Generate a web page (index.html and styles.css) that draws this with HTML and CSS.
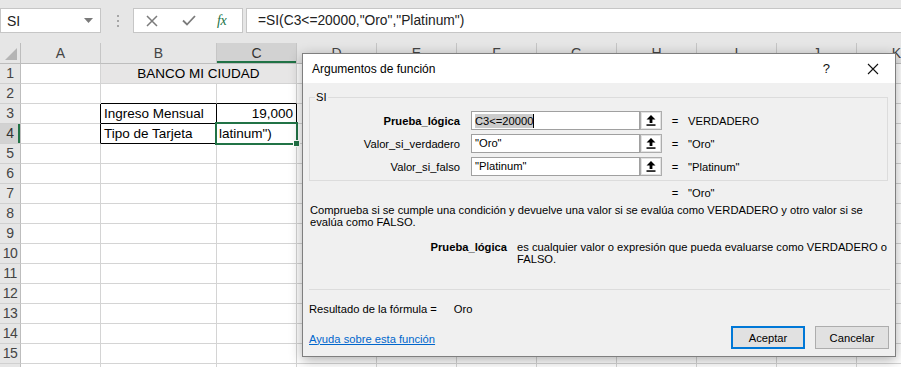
FILE: index.html
```html
<!DOCTYPE html>
<html lang="es">
<head>
<meta charset="utf-8">
<title>Argumentos de función</title>
<link rel="stylesheet" href="styles.css">
</head>
<body>
<div class="topbar">
  <div class="namebox"><span>SI</span><svg class="caret" width="9" height="5" viewBox="0 0 9 5"><path d="M0 0H9L4.5 5Z" fill="#7a7a7a"/></svg></div>
  <svg class="grip" width="6" height="14" viewBox="0 0 6 14"><rect x="2" y="1" width="2" height="2" fill="#a6a6a6"/><rect x="2" y="6" width="2" height="2" fill="#a6a6a6"/><rect x="2" y="11" width="2" height="2" fill="#a6a6a6"/></svg>
  <div class="fxbtns">
    <svg class="ic-x" width="12" height="12" viewBox="0 0 12 12"><path d="M1 1L11 11M11 1L1 11" stroke="#7b7b7b" stroke-width="1.5" fill="none"/></svg>
    <svg class="ic-ok" width="14" height="11" viewBox="0 0 14 11"><path d="M1 5.5L5 9.5L13 1" stroke="#7b7b7b" stroke-width="1.8" fill="none"/></svg>
    <span class="fx">fx</span>
  </div>
  <div class="formula">=SI(C3&lt;=20000,"Oro","Platinum")</div>
</div>

<div class="sheet">
  <div class="row hdr">
    <div class="corner"><svg width="14" height="14" viewBox="0 0 14 14"><path d="M13 1V13H1Z" fill="#b5b5b5"/></svg></div>
    <div class="ch wa">A</div><div class="ch wb">B</div><div class="ch wc sel">C</div>
    <div class="ch wc">D</div><div class="ch wc">E</div><div class="ch wc">F</div><div class="ch wc">G</div>
    <div class="ch wc">H</div><div class="ch wc">I</div><div class="ch wc">J</div><div class="ch wc">K</div>
  </div>
  <div class="row"><div class="rh">1</div><div class="cell wa"></div><div class="cell wbc fill">BANCO MI CIUDAD</div><div class="rest"></div></div>
  <div class="row"><div class="rh">2</div><div class="cell wa"></div><div class="cell wb bb-k"></div><div class="cell wc bb-k"></div><div class="rest"></div></div>
  <div class="row"><div class="rh">3</div><div class="cell wa br-k"></div><div class="cell wb k">Ingreso Mensual</div><div class="cell wc k num">19,000</div><div class="rest"></div></div>
  <div class="row"><div class="rh rsel">4</div><div class="cell wa br-k"></div><div class="cell wb k">Tipo de Tarjeta</div><div class="cell wc k active">latinum")<span class="selbox"><span class="handle"></span></span></div><div class="rest"></div></div>
  <div class="row"><div class="rh">5</div><div class="cell wa"></div><div class="cell wb"></div><div class="cell wc"></div><div class="rest"></div></div>
  <div class="row"><div class="rh">6</div><div class="cell wa"></div><div class="cell wb"></div><div class="cell wc"></div><div class="rest"></div></div>
  <div class="row"><div class="rh">7</div><div class="cell wa"></div><div class="cell wb"></div><div class="cell wc"></div><div class="rest"></div></div>
  <div class="row"><div class="rh">8</div><div class="cell wa"></div><div class="cell wb"></div><div class="cell wc"></div><div class="rest"></div></div>
  <div class="row"><div class="rh">9</div><div class="cell wa"></div><div class="cell wb"></div><div class="cell wc"></div><div class="rest"></div></div>
  <div class="row"><div class="rh">10</div><div class="cell wa"></div><div class="cell wb"></div><div class="cell wc"></div><div class="rest"></div></div>
  <div class="row"><div class="rh">11</div><div class="cell wa"></div><div class="cell wb"></div><div class="cell wc"></div><div class="rest"></div></div>
  <div class="row"><div class="rh">12</div><div class="cell wa"></div><div class="cell wb"></div><div class="cell wc"></div><div class="rest"></div></div>
  <div class="row"><div class="rh">13</div><div class="cell wa"></div><div class="cell wb"></div><div class="cell wc"></div><div class="rest"></div></div>
  <div class="row"><div class="rh">14</div><div class="cell wa"></div><div class="cell wb"></div><div class="cell wc"></div><div class="rest"></div></div>
  <div class="row"><div class="rh">15</div><div class="cell wa"></div><div class="cell wb"></div><div class="cell wc"></div><div class="rest"></div></div>
  <div class="row"><div class="rh"></div><div class="cell wa"></div><div class="cell wb"></div><div class="cell wc"></div><div class="rest"></div></div>
</div>

<div class="dialog">
  <div class="dtitle">
    <span class="dname">Argumentos de función</span>
    <span class="help">?</span>
    <svg class="close" width="12" height="12" viewBox="0 0 12 12"><path d="M1 1L11 11M11 1L1 11" stroke="#111" stroke-width="1.1" fill="none"/></svg>
  </div>
  <div class="dbody">
    <div class="group">
      <span class="legend">SI</span>
      <div class="arg">
        <span class="lbl strong">Prueba_lógica</span>
        <div class="inp"><span class="hl">C3&lt;=20000</span><span class="cursor"></span></div>
        <div class="pick"><svg width="10" height="11" viewBox="0 0 10 11"><path d="M5 0L9.5 4.5H6.4V8H3.6V4.5H0.5Z" fill="#000"/><rect x="0.5" y="9.3" width="9" height="1.5" fill="#000"/></svg></div>
        <span class="eq">=</span><span class="val">VERDADERO</span>
      </div>
      <div class="arg">
        <span class="lbl">Valor_si_verdadero</span>
        <div class="inp">"Oro"</div>
        <div class="pick"><svg width="10" height="11" viewBox="0 0 10 11"><path d="M5 0L9.5 4.5H6.4V8H3.6V4.5H0.5Z" fill="#000"/><rect x="0.5" y="9.3" width="9" height="1.5" fill="#000"/></svg></div>
        <span class="eq">=</span><span class="val">"Oro"</span>
      </div>
      <div class="arg">
        <span class="lbl">Valor_si_falso</span>
        <div class="inp">"Platinum"</div>
        <div class="pick"><svg width="10" height="11" viewBox="0 0 10 11"><path d="M5 0L9.5 4.5H6.4V8H3.6V4.5H0.5Z" fill="#000"/><rect x="0.5" y="9.3" width="9" height="1.5" fill="#000"/></svg></div>
        <span class="eq">=</span><span class="val">"Platinum"</span>
      </div>
    </div>
    <div class="result"><span class="eq">=</span><span class="val">"Oro"</span></div>
    <p class="desc">Comprueba si se cumple una condición y devuelve una valor si se evalúa como VERDADERO y otro valor si se<br>evalúa como FALSO.</p>
    <div class="argdesc"><span class="adl">Prueba_lógica</span><span class="adt">es cualquier valor o expresión que pueda evaluarse como VERDADERO o<br>FALSO.</span></div>
    <div class="sep"></div>
    <div class="formres"><span>Resultado de la fórmula =</span><span class="fr-val">Oro</span></div>
    <div class="footer">
      <a class="help-link" href="#">Ayuda sobre esta función</a>
      <button class="btn primary">Aceptar</button>
      <button class="btn">Cancelar</button>
    </div>
  </div>
</div>
</body>
</html>
```

FILE: styles.css
```css
html, body {
  margin: 0;
  padding: 0;
}
body {
  width: 901px;
  height: 367px;
  overflow: hidden;
  position: relative;
  background: #fff;
  font-family: "Liberation Sans", Arial, sans-serif;
  color: #000;
}

/* ---------- top bar ---------- */
.topbar {
  height: 43px;
  box-sizing: border-box;
  padding-top: 8px;
  background: #e6e6e6;
  display: flex;
  align-items: flex-start;
}
.namebox {
  width: 101px;
  height: 25px;
  box-sizing: border-box;
  background: #fff;
  border: 1px solid #c6c6c6;
  display: flex;
  align-items: center;
  justify-content: space-between;
  padding: 0 7px 0 6px;
  font-size: 14px;
  color: #222;
}
.grip {
  margin-left: 14px;
  margin-top: 6px;
  flex: none;
}
.fxbtns {
  margin-left: 12px;
  width: 110px;
  height: 25px;
  box-sizing: border-box;
  background: #fff;
  border: 1px solid #c6c6c6;
  display: flex;
  align-items: center;
  padding-left: 12px;
}
.ic-ok { margin-left: 24px; }
.fx {
  margin-left: 21px;
  font-family: "Liberation Serif", serif;
  font-style: italic;
  font-size: 14px;
  color: #217346;
  letter-spacing: -0.5px;
}
.formula {
  margin-left: 3px;
  flex: 1;
  height: 25px;
  box-sizing: border-box;
  background: #fff;
  border: 1px solid #c6c6c6;
  border-right: none;
  padding-left: 11px;
  font-size: 13.8px;
  line-height: 23px;
  color: #222;
  white-space: nowrap;
}

/* ---------- sheet ---------- */
.sheet {
  font-size: 13.5px;
}
.row {
  display: flex;
  height: 20px;
}
.row.hdr {
  height: 21px;
}
.corner, .ch, .rh, .cell {
  flex: none;
  box-sizing: border-box;
}
.corner {
  width: 21px;
  background: #e6e6e6;
  border-right: 1px solid #bdbdbd;
  border-bottom: 1px solid #bdbdbd;
  display: flex;
  align-items: flex-end;
  justify-content: flex-end;
  padding: 0 2px 2px 0;
}
.ch {
  background: #e6e6e6;
  border-right: 1px solid #c6c6c6;
  border-bottom: 1px solid #bdbdbd;
  text-align: center;
  font-size: 14px;
  line-height: 20px;
  color: #444;
}
.ch.sel {
  background: #d2d2d2;
  color: #333;
  box-shadow: inset 0 -2px 0 #217346;
}
.wa { width: 80px; }
.wb { width: 116px; }
.wc { width: 80px; }
.wbc { width: 196px; }
.rh {
  width: 21px;
  background: #e6e6e6;
  border-right: 1px solid #bdbdbd;
  border-bottom: 1px solid #d0d0d0;
  text-align: center;
  font-size: 14px;
  line-height: 19px;
  color: #444;
  letter-spacing: -0.5px;
}
.rh.rsel {
  background: #d2d2d2;
  color: #333;
  box-shadow: inset -2px 0 0 #217346;
}
.cell {
  border-right: 1px solid #d4d4d4;
  border-bottom: 1px solid #d4d4d4;
  line-height: 19px;
  padding: 0 3px;
  white-space: nowrap;
  overflow: visible;
  color: #000;
}
.cell.fill {
  background: #e7e6e6;
  text-align: center;
}
.cell.bb-k { border-bottom-color: #000; }
.cell.br-k { border-right-color: #000; }
.cell.k { border-right-color: #000; border-bottom-color: #000; }
.cell.num { text-align: right; }
.cell.active {
  position: relative;
  padding-left: 2px;
}
.selbox {
  position: absolute;
  left: -2px;
  top: -2px;
  right: -2px;
  bottom: -2px;
  border: 2px solid #217346;
}
.handle {
  position: absolute;
  right: -4px;
  bottom: -4px;
  width: 5px;
  height: 5px;
  background: #217346;
  border: 1px solid #fff;
}
.rest {
  flex: none;
  width: 640px;
  box-sizing: border-box;
  border-bottom: 1px solid #d4d4d4;
  background-image: linear-gradient(to right, transparent 79px, #d4d4d4 79px);
  background-size: 80px 100%;
}

/* ---------- dialog ---------- */
.dialog {
  position: absolute;
  left: 302px;
  top: 53px;
  width: 594px;
  height: 304px;
  box-sizing: border-box;
  border: 1px solid #7f7f7f;
  background: #f0f0f0;
  box-shadow: 0 3px 12px rgba(0, 0, 0, 0.32);
  font-size: 11.2px;
}
.dtitle {
  height: 29px;
  background: #fff;
  display: flex;
  align-items: center;
  padding-left: 9px;
  font-size: 12px;
}
.dname { flex: 1; }
.help {
  font-size: 13px;
  margin-right: 37px;
  color: #111;
}
.close {
  margin-right: 16px;
}
.dbody {
  padding: 0;
}
.group {
  position: relative;
  margin: 14px 7px 0 6px;
  height: 84px;
  box-sizing: border-box;
  border: 1px solid #dcdcdc;
  padding-top: 13px;
}
.legend {
  position: absolute;
  left: 5px;
  top: -7px;
  padding: 0 1px;
  background: #f0f0f0;
  line-height: 13px;
}
.arg {
  display: flex;
  align-items: center;
  height: 19px;
  margin-bottom: 4px;
}
.lbl {
  width: 150px;
  text-align: right;
  margin-right: 11px;
  white-space: nowrap;
}
.strong { font-weight: bold; }
.inp {
  width: 169px;
  height: 19px;
  box-sizing: border-box;
  background: #fff;
  border: 1px solid #a0a0a0;
  padding-left: 3px;
  line-height: 17px;
  display: flex;
  align-items: center;
  white-space: nowrap;
}
.hl {
  background: #cccccc;
  line-height: 14px;
}
.cursor {
  width: 1px;
  height: 14px;
  background: #000;
}
.pick {
  width: 22px;
  height: 19px;
  box-sizing: border-box;
  border: 1px solid #adadad;
  background: #fff;
  box-shadow: inset 0 0 0 1px #e3e3e3;
  display: flex;
  align-items: center;
  justify-content: center;
}
.eq {
  width: 14px;
  margin-left: 6px;
  text-align: center;
}
.val {
  margin-left: 6px;
  white-space: nowrap;
}
.result {
  display: flex;
  margin: 5px 0 0 359px;
  line-height: 14px;
}
.desc {
  margin: 4px 0 0 7px;
  line-height: 12px;
  white-space: nowrap;
}
.argdesc {
  display: flex;
  margin: 13px 0 0 7px;
  line-height: 12px;
}
.adl {
  width: 197px;
  text-align: right;
  font-weight: bold;
  margin-right: 10px;
  flex: none;
}
.adt { white-space: nowrap; }
.sep {
  margin: 24px 5px 0 6px;
  height: 1px;
  background: #dcdcdc;
}
.formres {
  display: flex;
  margin: 12px 0 0 6px;
  line-height: 14px;
}
.fr-val { margin-left: 17px; }
.footer {
  display: flex;
  align-items: center;
  margin: 10px 6px 0 6px;
}
.help-link {
  flex: 1;
  color: #0066cc;
  text-decoration: underline;
  margin-top: 2px;
}
.btn {
  width: 74px;
  height: 23px;
  box-sizing: border-box;
  background: #e1e1e1;
  border: 1px solid #adadad;
  font-family: "Liberation Sans", Arial, sans-serif;
  font-size: 11.2px;
  color: #000;
  padding: 0;
  margin-left: 10px;
}
.btn.primary {
  border: 2px solid #0078d7;
  margin-left: 0;
}
```
